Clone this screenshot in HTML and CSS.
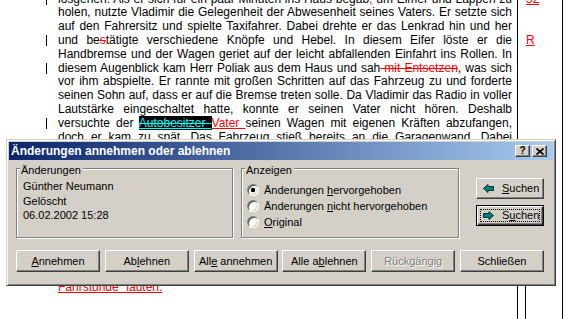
FILE: index.html
```html
<!DOCTYPE html>
<html lang="de">
<head>
<meta charset="utf-8">
<title>Änderungen annehmen oder ablehnen</title>
<link rel="stylesheet" href="styles.css">
</head>
<body>
<div class="screen">
  <main class="doc">
    <div class="text">
      <div class="ln chg"><span class="bar"></span><span class="t">losgehen. Als er sich für ein paar Minuten ins Haus begab<span class="ins">,</span> um Eimer und Lappen zu</span></div>
      <div class="ln"><span class="bar"></span><span class="t">holen, nutzte Vladimir die Gelegenheit der Abwesenheit seines Vaters. Er setzte sich</span></div>
      <div class="ln"><span class="bar"></span><span class="t">auf den Fahrersitz und spielte Taxifahrer. Dabei drehte er das Lenkrad hin und her</span></div>
      <div class="ln chg"><span class="bar"></span><span class="t">und be<span class="del">s</span>tätigte verschiedene Knöpfe und Hebel. In diesem Eifer löste er die</span></div>
      <div class="ln"><span class="bar"></span><span class="t">Handbremse und der Wagen geriet auf der leicht abfallenden Einfahrt ins Rollen. In</span></div>
      <div class="ln chg"><span class="bar"></span><span class="t">diesem Augenblick kam Herr Poliak aus dem Haus und sah<span class="del"> mit Entsetzen</span>, was sich</span></div>
      <div class="ln"><span class="bar"></span><span class="t">vor ihm abspielte. Er rannte mit großen Schritten auf das Fahrzeug zu und forderte</span></div>
      <div class="ln"><span class="bar"></span><span class="t">seinen Sohn auf, dass er auf die Bremse treten solle. Da Vladimir das Radio in voller</span></div>
      <div class="ln"><span class="bar"></span><span class="t">Lautstärke eingeschaltet hatte, konnte er seinen Vater nicht hören. Deshalb</span></div>
      <div class="ln chg"><span class="bar"></span><span class="t">versuchte der <span class="hl">Autobesitzer </span><span class="ins">Vater </span>seinen Wagen mit eigenen Kräften abzufangen,</span></div>
      <div class="ln"><span class="bar"></span><span class="t">doch er kam zu spät. Das Fahrzeug stieß bereits an die Garagenwand. Dabei</span></div>
      <div class="ln last"><span class="bar"></span><span class="t"><span class="ins">Fahrstunde" lauten.</span></span></div>
    </div>
  </main>
  <aside class="margin">
    <div class="balloons">
      <div class="bl"><span class="ins">52</span></div>
      <div class="bl"></div>
      <div class="bl"></div>
      <div class="bl"><span class="ins">R</span></div>
    </div>
    <div class="lower"></div>
  </aside>
</div>

<div class="dialog" role="dialog" aria-label="Änderungen annehmen oder ablehnen">
  <div class="titlebar">
    <span class="title">Änderungen annehmen oder ablehnen</span>
    <span class="cap-btn help">?</span>
    <span class="cap-btn close"><svg width="8" height="7" viewBox="0 0 8 7"><path d="M0.5 0.5 L7.5 6.5 M7.5 0.5 L0.5 6.5" stroke="#000" stroke-width="1.6" fill="none"/></svg></span>
  </div>
  <div class="dlg-body">
    <div class="top-row">
      <div class="group g1">
        <span class="legend">Änderungen</span>
        <div class="info-list">
          <div class="info">Günther Neumann</div>
          <div class="info">Gelöscht</div>
          <div class="info">06.02.2002 15:28</div>
        </div>
      </div>
      <div class="group g2">
        <span class="legend">Anzeigen</span>
        <div class="radios">
          <div class="radio"><span class="rb checked"></span><span>Änderungen <u>h</u>ervorgehoben</span></div>
          <div class="radio"><span class="rb"></span><span>Änderungen <u>n</u>icht hervorgehoben</span></div>
          <div class="radio"><span class="rb"></span><span><u>O</u>riginal</span></div>
        </div>
      </div>
      <div class="side-btns">
        <div class="btn find"><svg class="arrow" width="11" height="9" viewBox="0 0 11 9"><path d="M0.5 4.5 L5 0.5 L5 2.5 L10.5 2.5 L10.5 6.5 L5 6.5 L5 8.5 Z" fill="#008080" stroke="#003030" stroke-width="1"/></svg><span><u>S</u>uchen</span></div>
        <div class="btn find default"><div class="focus"><svg class="arrow" width="11" height="9" viewBox="0 0 11 9"><path d="M10.5 4.5 L6 0.5 L6 2.5 L0.5 2.5 L0.5 6.5 L6 6.5 L6 8.5 Z" fill="#008080" stroke="#003030" stroke-width="1"/></svg><span>S<u>u</u>chen</span></div></div>
      </div>
    </div>
    <div class="btn-row">
      <div class="btn"><span><u>A</u>nnehmen</span></div>
      <div class="btn"><span>Ab<u>l</u>ehnen</span></div>
      <div class="btn"><span>All<u>e</u> annehmen</span></div>
      <div class="btn"><span>Alle a<u>b</u>lehnen</span></div>
      <div class="btn disabled"><span>Rückgängig</span></div>
      <div class="btn"><span>Schließen</span></div>
    </div>
  </div>
</div>
</body>
</html>
```
FILE: styles.css
```css
* { box-sizing: border-box; }
html, body { margin: 0; padding: 0; }
body {
  width: 568px;
  height: 319px;
  overflow: hidden;
  position: relative;
  background: #fff;
  font-family: "Liberation Sans", Arial, sans-serif;
}

/* ---------- document ---------- */
.screen { display: flex; height: 319px; }
.doc { width: 517px; flex: none; padding-left: 46px; overflow: hidden; }
.text { margin-top: -7.4px; font-size: 12px; line-height: 13.8px; color: #000; }
.ln { display: flex; align-items: center; height: 13.8px; }
.bar { flex: none; width: 1px; height: 11px; margin-right: 11px; }
.chg .bar { background: #000; }
.t { flex: none; width: 454px; text-align: justify; text-align-last: justify; }
.last { margin-top: 137px; }
.last .t { text-align: left; text-align-last: left; }

.ins { color: #f00; text-decoration: underline; }
.del { color: #f00; text-decoration: line-through; }
.hl { background: #000; color: #0ff; text-decoration: underline line-through; }

.margin {
  flex: none;
  width: 46px;
  border-left: 1px solid #000;
  border-right: 1px solid #000;
  display: flex;
  flex-direction: column;
}
.balloons { flex: 1; margin-top: -7.4px; padding-left: 8px; font-size: 12px; line-height: 13.8px; }
.bl { height: 13.8px; }
.lower { height: 70px; margin-left: 7px; border-left: 1px solid #000; }

/* ---------- dialog ---------- */
.dialog {
  position: absolute;
  left: 6px;
  top: 139px;
  width: 550px;
  height: 147px;
  background: #d4d0c8;
  border: 1px solid;
  border-color: #d4d0c8 #404040 #404040 #d4d0c8;
  box-shadow: inset 1px 1px #fff, inset -1px -1px #808080;
  padding: 2px;
  font-size: 11px;
  color: #000;
}
.titlebar {
  height: 18px;
  background: linear-gradient(to right, #0a246a, #a6caf0);
  display: flex;
  align-items: center;
  padding: 0 6px 0 2px;
}
.title { flex: 1; color: #fff; font-weight: bold; font-size: 12px; line-height: 14px; }
.cap-btn {
  width: 15px;
  height: 12px;
  margin-left: 2px;
  background: #d4d0c8;
  border: 1px solid;
  border-color: #fff #404040 #404040 #fff;
  box-shadow: inset -1px -1px #808080;
  display: flex;
  align-items: center;
  justify-content: center;
  font-weight: bold;
  font-size: 10px;
  line-height: 10px;
}
.cap-btn.help { margin-left: 0; }

.dlg-body { padding: 8px 0 0 7px; }
.top-row { display: flex; align-items: flex-start; height: 70px; }
.group {
  height: 70px;
  border: 1px solid #808080;
  box-shadow: 1px 1px 0 #fff, inset 1px 1px 0 #fff;
}
.g1 { width: 217px; padding-left: 6px; }
.g2 { width: 218px; margin-left: 8px; padding-left: 5px; }
.legend {
  display: table;
  margin: -5px 0 0 -3px;
  padding: 0 2px 0 1px;
  background: #d4d0c8;
  line-height: 12px;
}
.g2 .legend { margin-left: -2px; }
.info-list { margin-top: 3px; }
.info { line-height: 14.5px; }

.radios { margin-top: 6px; }
.radio { display: flex; align-items: center; height: 16px; }
.rb {
  flex: none;
  width: 12px;
  height: 12px;
  margin-right: 5px;
  border-radius: 50%;
  border: 1px solid;
  border-color: #808080 #fff #fff #808080;
  box-shadow: inset 1px 1px #404040, inset -1px -1px #d4d0c8;
  background: #fff;
}
.rb.checked { background: radial-gradient(circle, #000 0, #000 2px, #fff 2.6px); }

.side-btns { margin-left: 17px; padding-top: 10px; display: flex; flex-direction: column; gap: 6px; }

.btn {
  height: 22px;
  background: #d4d0c8;
  border: 1px solid;
  border-color: #fff #404040 #404040 #fff;
  box-shadow: inset -1px -1px #808080;
  display: flex;
  align-items: center;
  justify-content: center;
  line-height: 13px;
}
.btn.find { width: 68px; height: 21px; justify-content: flex-start; padding-left: 6px; }
.btn.find .arrow { margin-right: 8px; }
.btn.default {
  border: 1px solid #000;
  box-shadow: inset 1px 1px #fff, inset -1px -1px #404040, inset -2px -2px #808080;
  padding: 3px;
}
.focus {
  flex: 1;
  align-self: stretch;
  border: 1px dotted #000;
  display: flex;
  align-items: center;
  padding-left: 2px;
}
.btn.disabled { color: #808080; text-shadow: 1px 1px 0 #fff; }

.btn-row {
  display: flex;
  justify-content: space-between;
  width: 528px;
  margin-top: 12px;
}
.btn-row .btn { width: 84px; }
u { text-decoration: underline; text-underline-offset: 1px; }
```
